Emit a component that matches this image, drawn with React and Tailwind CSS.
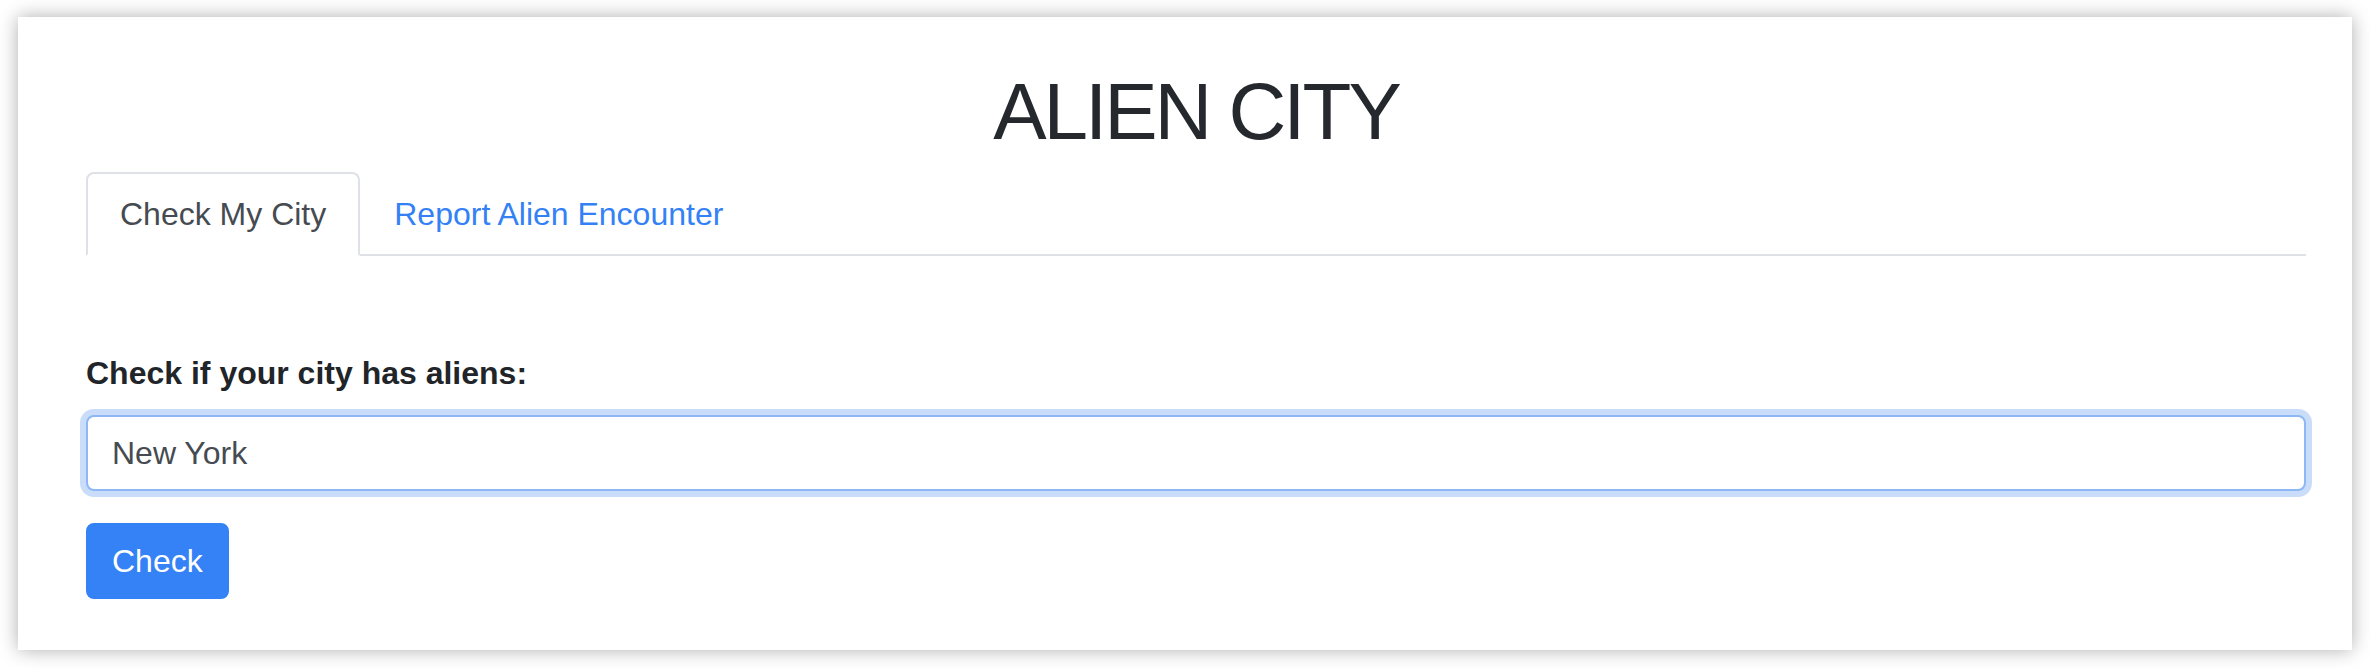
export default function App() {
  return (
    <div className="min-h-screen bg-white pt-[17px] pl-[18px] font-['Liberation_Sans',Arial,sans-serif]">
      {/* window */}
      <div className="w-[2334px] h-[633px] bg-white shadow-[0_0_18px_rgba(0,0,0,0.32)] pl-[68px] pr-[46px] pt-[47px]">
        <h1 className="text-center text-[80px] leading-[96px] tracking-[-3px] text-[#25282c] mb-[12px]">ALIEN CITY</h1>

        {/* tabs */}
        <div className="flex border-b-2 border-[#dee2e6]">
          <div className="-mb-[2px] bg-white border-2 border-[#dee2e6] border-b-white rounded-t-[8px] px-[32px] py-[16px] text-[32px] leading-[48px] text-[#464b52]">
            Check My City
          </div>
          <div className="-mb-[2px] border-2 border-transparent px-[32px] py-[16px] text-[32px] leading-[48px] text-[#3381f5]">
            Report Alien Encounter
          </div>
        </div>

        <form className="mt-[93px]" onSubmit={(e) => e.preventDefault()}>
          <label className="block font-bold text-[32px] leading-[48px] text-[#212529] mb-[18px]">Check if your city has aliens:</label>
          <input
            defaultValue="New York"
            className="block w-full h-[76px] bg-white border-2 border-[#8db8f5] rounded-[8px] px-[24px] text-[32px] leading-[48px] text-[#464b52] outline-none shadow-[0_0_0_6px_#c9ddfb]"
          />
          <button className="mt-[32px] bg-[#3482f6] border-2 border-[#3482f6] rounded-[8px] px-[24px] py-[12px] text-[32px] leading-[48px] text-white">
            Check
          </button>
        </form>
      </div>
    </div>
  )
}
